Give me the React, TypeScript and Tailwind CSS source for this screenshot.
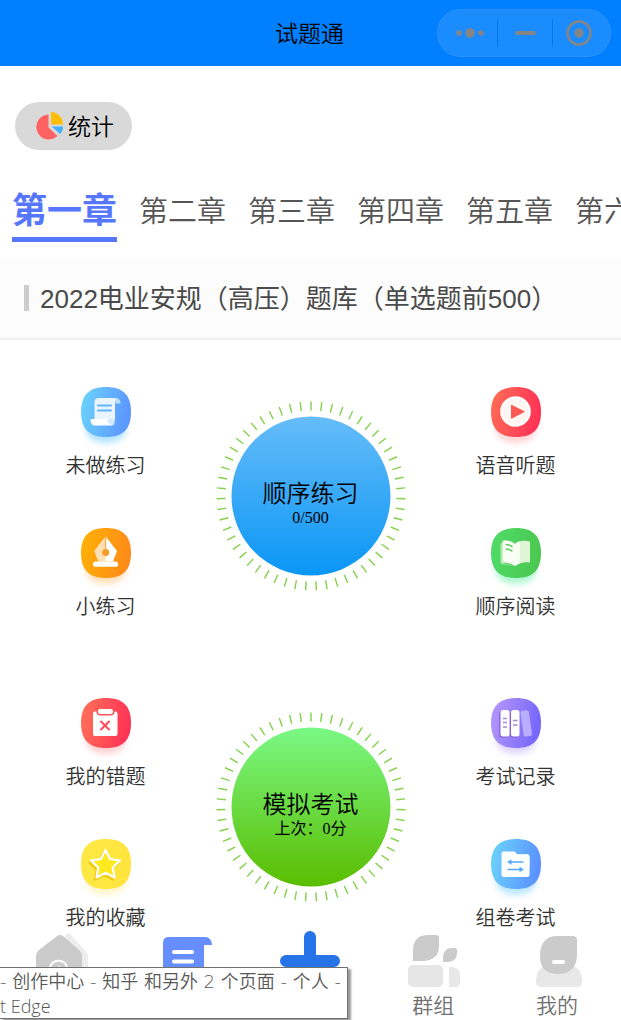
import React from "react";

const SQUIRCLE =
  "M25 0C42 0 50 8 50 25S42 50 25 50 0 42 0 25 8 0 25 0Z";

type TileProps = {
  id: string;
  from: string;
  to: string;
  glow: string;
  children: React.ReactNode;
};

function Tile({ id, from, to, glow, children }: TileProps) {
  return (
    <svg viewBox="0 0 50 50" className="h-[50px] w-[50px] overflow-visible" aria-hidden="true">
      <defs>
        <linearGradient id={id} x1="0" y1="0.3" x2="1" y2="0.5">
          <stop offset="0" stopColor={from} />
          <stop offset="1" stopColor={to} />
        </linearGradient>
        <filter id={id + "-blur"} x="-30%" y="-30%" width="160%" height="160%">
          <feGaussianBlur stdDeviation="3" />
        </filter>
      </defs>
      <ellipse cx="25" cy="43" rx="20" ry="13" fill={glow} opacity="0.6" filter={`url(#${id}-blur)`} />
      <path d={SQUIRCLE} fill={`url(#${id})`} />
      {children}
    </svg>
  );
}

const ScrollIcon = () => (
  <Tile id="scroll" from="#6bd2fb" to="#5b94ff" glow="#7fd0ff">
    <path d="M34 11c4 0 5.500 2 5.500 5.500h-5z" fill="#b9dcff" />
    <path d="M17.500 11H36c-1.500 1-2 2.500-2 5v18H13.500V15c0-2.500 1.500-4 4-4Z" fill="#e9f4ff" />
    <path d="M9.500 32H27c0 3 1.500 5 4 5.500 2-.5 3-2 3-4.500 0 4-1.500 5.500-4 5.500H14c-3 0-4.500-2.500-4.500-6.500Z" fill="#fff" />
    <path d="M27 32c0 3 1.500 5.500 3.500 5.500S34 35.500 34 32Z" fill="#d3e9ff" />
    <path d="M17 18.500h13M17 23.500h13" stroke="#5fb4fb" strokeWidth="1.800" strokeLinecap="round" />
  </Tile>
);

const PlayIcon = () => (
  <Tile id="play" from="#ff6c55" to="#ff3156" glow="#ffb6b8">
    <circle cx="24.500" cy="24.500" r="15.300" fill="#fff" />
    <circle cx="24.500" cy="24.500" r="13" fill="#fff5f3" />
    <path d="M20 18.500v12.500c0 .6.500.8 1 .5l12-6.200c.6-.3.6-.9 0-1.200l-12-6c-.5-.3-1-.1-1 .4Z" fill="#ff5954" />
  </Tile>
);

const PenIcon = () => (
  <Tile id="pen" from="#ffb108" to="#ff8a18" glow="#ffc98a">
    <path d="M24.700 8.500 36 23l-4 10.500H17.500L13.500 23Z" fill="#fff" />
    <path d="M24.700 8.500V33.500h-7.200L13.500 23Z" fill="#ffe0b4" />
    <path d="M24.700 9v14" stroke="#ffa01b" strokeWidth="1" />
    <circle cx="24.700" cy="24.500" r="3.500" fill="#f99b2a" />
    <rect x="12" y="33.500" width="25" height="5.300" rx="2.600" fill="#fff" />
  </Tile>
);

const BookIcon = () => (
  <Tile id="book" from="#4fdb68" to="#4cc850" glow="#74f2b0">
    <path d="m9.500 15.500 2-1V35l12.500 3-13-2c-1-.2-1.500-.7-1.500-1.500Z" fill="#b6ebb0" />
    <path d="M11.500 13c5-1.200 9.500 0 12.500 3v22c-3.500-2.500-7.500-3.500-12.500-3.500Z" fill="#fafff5" />
    <path d="M24 16c3.500-3 8-4 15-2.500v21c-6-.7-11 .5-15 3.500Z" fill="#dff4d4" />
    <path d="M24 16c1.500-1.500 3-2.300 5-2.800V35.500c-2 .6-3.500 1.500-5 2.500Z" fill="#f7fff3" />
    <path d="M14.500 16.500c3 0 5 .8 7 2.300M14.500 21c3 0 5 .8 7 2.300" stroke="#63ce63" strokeWidth="1.600" fill="none" />
  </Tile>
);

const MistakeIcon = () => (
  <Tile id="mistake" from="#ff7058" to="#ff3156" glow="#ffb3b5">
    <rect x="12" y="13.500" width="24.500" height="24.500" rx="2" fill="#fff" />
    <path d="M15.500 13h18v1c0 2-1.500 3.500-3.500 3.500H19c-2 0-3.500-1.500-3.500-3.500Z" fill="#ff5257" />
    <rect x="17" y="11" width="15" height="5" rx="2" fill="#fff" />
    <path d="m20 23.500 8 8m0-8-8 8" stroke="#ff4758" strokeWidth="2" strokeLinecap="round" />
  </Tile>
);

const RecordsIcon = () => (
  <Tile id="records" from="#b496fb" to="#7465fa" glow="#c7bcff">
    <rect x="8.300" y="13" width="9" height="26.500" rx="2.500" fill="#8b5fd4" />
    <rect x="19" y="13" width="8" height="26.500" rx="2.500" fill="#8b5fd4" />
    <rect x="9.500" y="12" width="9" height="26.500" rx="2.500" fill="#fff" />
    <rect x="20" y="12" width="8.500" height="26.500" rx="2.500" fill="#fff" />
    <rect x="31" y="12.500" width="8.500" height="26" rx="2.500" fill="#b9adff" transform="rotate(-8 35 25.500)" />
    <path d="M12 20.500h4M12 24.500h4M12 29h4M22 22.500h4.500M22 27h4.500" stroke="#a08ad9" strokeWidth="1.500" />
  </Tile>
);

const StarIcon = () => (
  <Tile id="star" from="#ffe846" to="#ffe43d" glow="#fff0a4">
    <path
      d="m24 12 4.500 9 10 1.500-7.300 7L33 39.500l-9-4.700-9 4.700 1.800-10-7.300-7 10-1.500Z"
      fill="none"
      stroke="#efcb16"
      strokeWidth="2.500"
      strokeLinejoin="round"
      transform="translate(-1 1)"
    />
    <path
      d="m24.500 11 4.500 9 10 1.500-7.300 7L33.500 38.500l-9-4.700-9 4.700 1.800-10-7.300-7 10-1.500Z"
      fill="#ffe91f"
      stroke="#fff"
      strokeWidth="2.200"
      strokeLinejoin="round"
    />
  </Tile>
);

const FolderIcon = () => (
  <Tile id="folder" from="#6bd2fb" to="#5b90ff" glow="#8bd6ff">
    <path d="M20 15h16c2 0 2.500 1 2.500 3v10H20Z" fill="#c9e7ff" />
    <path d="M13 12.500h9.500c1.500 0 2 .5 2.500 1.500l1 1.500h10c1.700 0 2.500.8 2.500 2.500v17.500c0 1.700-.8 2.500-2.500 2.500H13c-1.700 0-2.500-.8-2.500-2.500V15c0-1.700.8-2.500 2.500-2.500Z" fill="#fff" />
    <path d="M18 23h14.500M16.500 30.500H31" stroke="#55a9fc" strokeWidth="1.600" />
    <path d="m20.500 20.300-4.500 2.700 4.500 2.700ZM28.500 27.800l4.500 2.700-4.500 2.700Z" fill="#55a9fc" />
  </Tile>
);

function Entry({ icon, label }: { icon: React.ReactNode; label: string }) {
  return (
    <button type="button" className="flex flex-col items-center gap-4">
      {icon}
      <span className="text-xl leading-[26px] text-[#333]">{label}</span>
    </button>
  );
}

const TICKS = Array.from({ length: 55 }, (_, i) => (i * 360) / 55);

type DialProps = { id: string; title: string; note: string; from: string; to: string };

function Dial({ id, title, note, from, to }: DialProps) {
  return (
    <button
      type="button"
      className="relative mt-3.5 flex h-[190px] w-[190px] flex-col items-center justify-center pt-4 text-black"
    >
      <svg viewBox="0 0 190 190" className="absolute inset-0 h-full w-full" aria-hidden="true">
        <defs>
          <linearGradient id={id} x1="0" y1="0" x2="0" y2="1">
            <stop offset="0" stopColor={from} />
            <stop offset="1" stopColor={to} />
          </linearGradient>
        </defs>
        {TICKS.map((a) => (
          <path key={a} d="M95 .5v9" stroke="#85d04c" strokeWidth="1.400" transform={`rotate(${a} 95 95)`} />
        ))}
        <circle cx="95" cy="95" r="79.500" fill={`url(#${id})`} />
      </svg>
      <span className="relative text-2xl leading-7">{title}</span>
      <span className="relative font-['Liberation_Serif','Noto_Sans_CJK_SC',serif] text-base leading-5 font-normal">{note}</span>
    </button>
  );
}

type GroupProps = { left: React.ReactNode; dial: React.ReactNode; right: React.ReactNode };

function Group({ left, dial, right }: GroupProps) {
  return (
    <section className="grid grid-cols-3 items-start justify-items-center">
      <div className="flex flex-col items-center gap-[49px]">{left}</div>
      {dial}
      <div className="flex flex-col items-center gap-[49px]">{right}</div>
    </section>
  );
}

const CHAPTERS = ["第二章", "第三章", "第四章", "第五章", "第六章"];

function NavItem({ name, label, children }: { name: string; label?: string; children: React.ReactNode }) {
  return (
    <a href="#" aria-label={name} className="flex flex-col items-center gap-1.5">
      <svg viewBox="0 0 60 52" className="h-[52px] w-[60px] overflow-visible" aria-hidden="true">
        {children}
      </svg>
      {label && <span className="text-[21px] leading-7 text-[#707070]">{label}</span>}
    </a>
  );
}

export default function App() {
  return (
    <div className="relative flex min-h-screen flex-col overflow-hidden bg-white font-['Liberation_Sans','Noto_Sans_CJK_SC',sans-serif] font-[350]">
      <header className="grid h-[66px] grid-cols-[1fr_auto_1fr] items-center bg-[#0080ff] pr-2.5">
        <h1 className="col-start-2 pt-0.5 pl-2 text-[23px] leading-8 text-black">试题通</h1>
        <div className="flex h-12 w-[174px] items-center justify-self-end rounded-full bg-[#1a8cff] ring-1 ring-[#2b91f5] ring-inset">
          <button type="button" aria-label="更多" className="flex w-[60px] justify-center pl-1.5">
            <svg viewBox="0 0 28 10" className="h-2.5 w-7" fill="#858585">
              <circle cx="3" cy="5" r="2.800" />
              <circle cx="14" cy="5" r="4.800" />
              <circle cx="25" cy="5" r="2.800" />
            </svg>
          </button>
          <span className="h-7 w-px bg-[#0877e4]" />
          <button type="button" aria-label="最小化" className="flex w-[54px] justify-center">
            <span className="h-1 w-[21px] rounded-full bg-[#858585]" />
          </button>
          <span className="h-7 w-px bg-[#0877e4]" />
          <button type="button" aria-label="关闭" className="flex flex-1 justify-center pr-1.5">
            <svg viewBox="0 0 28 28" className="h-7 w-7">
              <circle cx="14" cy="14" r="11.500" fill="none" stroke="#858585" strokeWidth="2.600" />
              <circle cx="14" cy="14" r="4.700" fill="#858585" />
            </svg>
          </button>
        </div>
      </header>

      <div className="px-[15px] pt-9">
        <button type="button" className="flex h-12 items-center gap-1 rounded-full bg-[#d9d9d9] pr-[18px] pl-5 text-[23px] leading-8 text-black">
          <svg viewBox="0 0 29 28" className="h-7 w-[29px]" aria-hidden="true">
            <path d="M13.500 2.500v13l9 8.500A12.500 12.500 0 1 1 13.500 2.500Z" fill="#ff6263" />
            <path d="M16 0A12 12.500 0 0 1 28 12.500H16Z" fill="#ffbd05" />
            <path d="M16.500 14.500H28c0 3-.8 5-2.700 7.500Z" fill="#40b0ff" />
          </svg>
          <span className="pt-0.5">统计</span>
        </button>
      </div>

      <nav className="mt-[38px] flex items-start gap-[22px] overflow-hidden pl-3 whitespace-nowrap">
        <a href="#" className="border-b-[5px] border-[#5677fc] pb-1 text-[35px] leading-[45px] font-bold text-[#5677fc]">
          第一章
        </a>
        {CHAPTERS.map((c) => (
          <a key={c} href="#" className="text-[29px] leading-[49px] text-[#555]">
            {c}
          </a>
        ))}
      </nav>

      <div className="mt-4 flex h-[82px] items-center gap-[11px] border-b-2 border-[#efefef] bg-[#fcfcfc] pl-6">
        <span className="h-[26px] w-[5px] bg-[#ccc]" />
        <h2 className="pt-0.5 text-[26px] leading-9 font-normal whitespace-nowrap text-[#4a4a4a]">2022电业安规（高压）题库（单选题前500）</h2>
      </div>

      <main className="flex flex-col gap-[78px] px-[3px] pt-[47px]">
        <Group
          left={
            <>
              <Entry icon={<ScrollIcon />} label="未做练习" />
              <Entry icon={<PenIcon />} label="小练习" />
            </>
          }
          dial={<Dial id="dial-practice" title="顺序练习" note="0/500" from="#66bcf8" to="#0a96f6" />}
          right={
            <>
              <Entry icon={<PlayIcon />} label="语音听题" />
              <Entry icon={<BookIcon />} label="顺序阅读" />
            </>
          }
        />
        <Group
          left={
            <>
              <Entry icon={<MistakeIcon />} label="我的错题" />
              <Entry icon={<StarIcon />} label="我的收藏" />
            </>
          }
          dial={<Dial id="dial-exam" title="模拟考试" note="上次：0分" from="#7af884" to="#5abd00" />}
          right={
            <>
              <Entry icon={<RecordsIcon />} label="考试记录" />
              <Entry icon={<FolderIcon />} label="组卷考试" />
            </>
          }
        />
      </main>

      <nav className="mt-auto grid grid-cols-5 items-start pt-px pr-0.5">
        <NavItem name="首页">
          <path d="M34 0c2-1 4 0 5 1l14 15c2 2 3 4 3 7v25H20Z" fill="#ededed" />
          <path d="M25 2c2-1.500 4-1.500 6 0l16 14c2 2 3 3.500 3 6v26H4V22c0-2.500 1-4 3-6Z" fill="#cbcbcb" />
          <path d="M18 35c0-11 17-11 17 0M27 33l-5 4" fill="none" stroke="#fff" strokeWidth="2" strokeLinecap="round" />
        </NavItem>
        <NavItem name="题库">
          <path d="M13 3h36c4 0 7 3 7 8h-8v36H7V9c0-4 2-6 6-6Z" fill="#668eff" />
          <path d="M18 18h18M18 27.500h18" stroke="#fff" strokeWidth="4" strokeLinecap="round" />
        </NavItem>
        <NavItem name="添加">
          <path d="M31 3v47M7 27h48" stroke="#2774e9" strokeWidth="12" strokeLinecap="round" />
        </NavItem>
        <NavItem name="群组" label="群组">
          <path d="M10 27V16C10 7 15 1 25 1h8c2 0 3 1 3 3v8c0 9-5 14-15 15Z" fill="#cbcbcb" />
          <path d="M40 28v-4c0-7 4-10 9-10h3c1.500 0 2 1 2 2v3c0 6-4 9-10 9Z" fill="#cbcbcb" />
          <rect x="5" y="31" width="35" height="22" rx="5" fill="#e6e6e6" />
          <path d="M46 33c7 0 11 2 11 8v7c0 3-2 5-5 5h-6Z" fill="#e8e8e8" />
        </NavItem>
        <NavItem name="我的" label="我的">
          <path d="M9 47c0-9 5-16 13-16h20c8 0 13 7 13 16v1c0 3-2 5-5 5H14c-3 0-5-2-5-5Z" fill="#e8e8e8" />
          <path d="M13 22C13 9 19 2 30 2h15c3 0 5 1 5 4v15c0 12-7 19-19 19S13 34 13 22Z" fill="#cbcbcb" />
          <path d="M27 28h9" stroke="#fff" strokeWidth="4" strokeLinecap="round" />
        </NavItem>
      </nav>

      <div
        role="tooltip"
        className="absolute bottom-px left-0 border border-l-0 border-[#707070] bg-white pt-0.5 pr-1.5 font-['Open_Sans','Noto_Sans_CJK_SC',sans-serif] text-lg leading-6 whitespace-nowrap text-[#575757] shadow-[3px_2px_2px_#9a9a9a]"
      >
        <p className="font-['DejaVu_Sans','Noto_Sans_CJK_SC',sans-serif]">- 创作中心 - 知乎 和另外 2 个页面 - 个人 -</p>
        <p>t Edge</p>
      </div>
    </div>
  );
}
